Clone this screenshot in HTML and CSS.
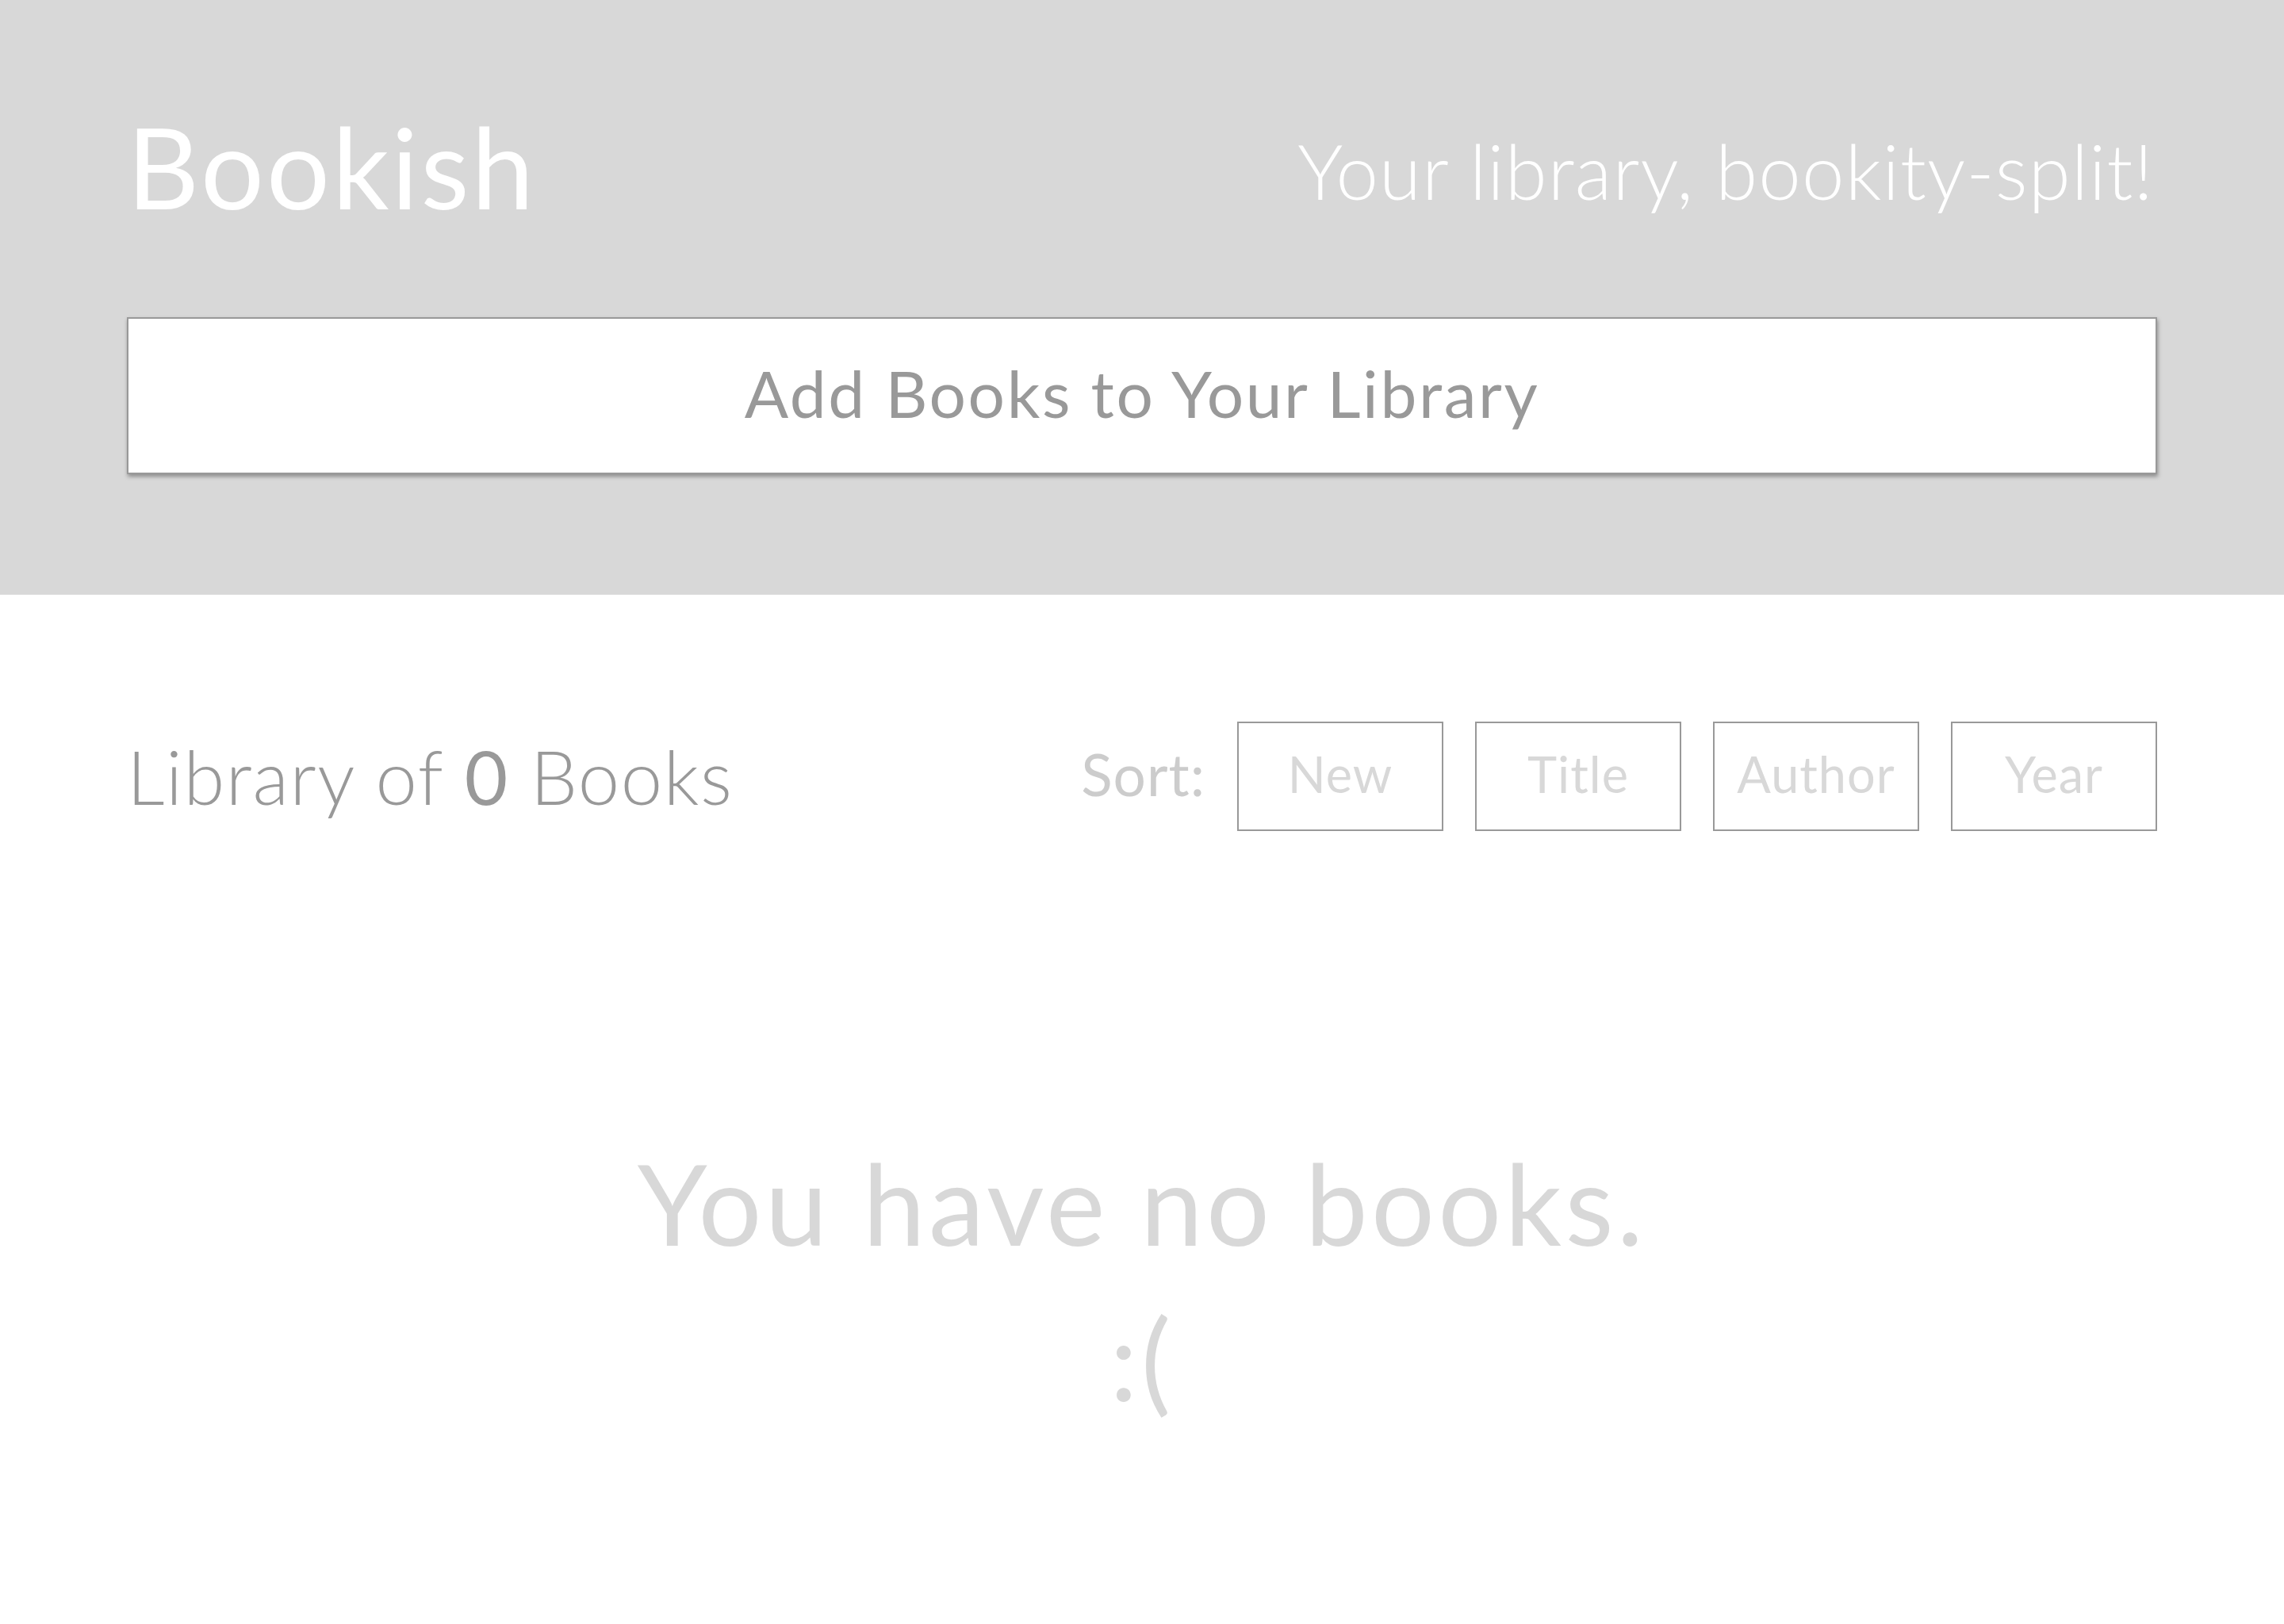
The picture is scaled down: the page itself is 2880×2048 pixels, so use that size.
FILE: index.html
```html
<!DOCTYPE html>
<html lang="en">
<head>
<meta charset="utf-8">
<title>Bookish</title>
<link rel="stylesheet" href="styles.css">
</head>
<body>
<header class="header">
  <div class="top">
    <h1 class="brand">Bookish</h1>
    <p class="tagline">Your library, bookity-split!</p>
  </div>
  <button class="add-btn" type="button">Add Books to Your Library</button>
</header>
<main class="main">
  <div class="toolbar">
    <h2 class="count">Library of <span class="num">0</span> Books</h2>
    <div class="sort">
      <span class="sort-label">Sort:</span>
      <button class="sort-btn" type="button">New</button>
      <button class="sort-btn" type="button">Title</button>
      <button class="sort-btn" type="button">Author</button>
      <button class="sort-btn" type="button">Year</button>
    </div>
  </div>
  <p class="empty">You have no books.<br>:(</p>
</main>
</body>
</html>
```
FILE: styles.css
```css
* { box-sizing: border-box; }

body {
  margin: 0;
  background: #ffffff;
  font-family: "Lato", "Liberation Sans", sans-serif;
}

.header {
  background: #d8d8d8;
  height: 750px;
  padding: 139px 160px 0;
}

.top {
  display: flex;
  justify-content: space-between;
  align-items: flex-start;
}

.brand {
  margin: 0;
  font-size: 141px;
  font-weight: 400;
  line-height: 1;
  letter-spacing: 3px;
  color: #ffffff;
}

.tagline {
  margin: 28px 4px 0 0;
  font-size: 96px;
  font-weight: 300;
  line-height: 1;
  letter-spacing: 1.1px;
  color: #ffffff;
}

.add-btn {
  display: flex;
  align-items: center;
  justify-content: center;
  width: 100%;
  height: 198px;
  margin-top: 120px;
  padding: 0 0 8px;
  background: #ffffff;
  border: 2px solid #999999;
  box-shadow: 1px 3px 5px rgba(0, 0, 0, 0.35);
  font-family: inherit;
  font-size: 82px;
  font-weight: 400;
  line-height: 1;
  letter-spacing: 2.6px;
  color: #999999;
}

.main {
  padding: 160px 160px 0;
}

.toolbar {
  display: flex;
  justify-content: space-between;
  align-items: center;
  height: 138px;
}

.count {
  margin: 0;
  font-size: 94px;
  font-weight: 300;
  line-height: 1;
  letter-spacing: 1.5px;
  color: #999999;
}

.num {
  font-weight: 400;
}

.sort {
  display: flex;
  align-items: center;
  gap: 40px;
  height: 100%;
}

.sort-label {
  padding-bottom: 6px;
  font-size: 73px;
  font-weight: 400;
  line-height: 1;
  letter-spacing: 1px;
  color: #cccccc;
}

.sort-btn {
  display: flex;
  align-items: center;
  justify-content: center;
  width: 260px;
  height: 138px;
  padding: 0 0 7px;
  background: #ffffff;
  border: 2px solid #999999;
  font-family: inherit;
  font-size: 63px;
  font-weight: 400;
  line-height: 1;
  letter-spacing: 1px;
  color: #d8d8d8;
}

.empty {
  margin: 371px 0 0;
  text-align: center;
  font-size: 141px;
  font-weight: 400;
  line-height: 196px;
  letter-spacing: 4.3px;
  color: #d8d8d8;
}
```
